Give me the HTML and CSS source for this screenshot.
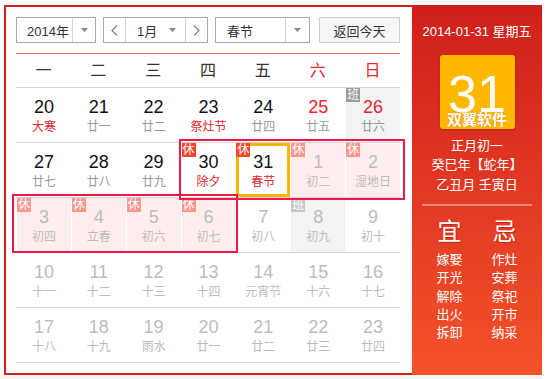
FILE: index.html
```html
<!DOCTYPE html>
<html lang="zh-CN">
<head>
<meta charset="utf-8">
<title>万年历</title>
<link rel="stylesheet" href="styles.css">
</head>
<body>
<div class="page">
  <div class="widget">
    <div class="main">
      <div class="toolbar">
        <div class="select year">
          <span class="sel-text">2014年</span>
          <span class="sel-arrow"><svg width="7" height="4" viewBox="0 0 7 4"><path d="M0 0H7L3.5 4Z" fill="#888"/></svg></span>
        </div>
        <div class="month-group">
          <span class="nav prev"><svg width="7" height="11" viewBox="0 0 7 11"><path d="M6 0.5L1 5.5L6 10.5" stroke="#808080" stroke-width="1.2" fill="none"/></svg></span>
          <span class="month"><span>1月</span><svg width="7" height="4" viewBox="0 0 7 4"><path d="M0 0H7L3.5 4Z" fill="#888"/></svg></span>
          <span class="nav next"><svg width="7" height="11" viewBox="0 0 7 11"><path d="M1 0.5L6 5.5L1 10.5" stroke="#808080" stroke-width="1.2" fill="none"/></svg></span>
        </div>
        <div class="select holiday">
          <span class="sel-text">春节</span>
          <span class="sel-arrow"><svg width="7" height="4" viewBox="0 0 7 4"><path d="M0 0H7L3.5 4Z" fill="#888"/></svg></span>
        </div>
        <button class="today-btn">返回今天</button>
      </div>

      <div class="weekdays">
        <span>一</span><span>二</span><span>三</span><span>四</span><span>五</span><span class="we">六</span><span class="we">日</span>
      </div>

      <div class="grid">
        <div class="row">
          <div class="cell cur"><div class="num">20</div><div class="lunar term">大寒</div></div>
          <div class="cell cur"><div class="num">21</div><div class="lunar">廿一</div></div>
          <div class="cell cur"><div class="num">22</div><div class="lunar">廿二</div></div>
          <div class="cell cur"><div class="num">23</div><div class="lunar term">祭灶节</div></div>
          <div class="cell cur"><div class="num">24</div><div class="lunar">廿四</div></div>
          <div class="cell cur weekend"><div class="num">25</div><div class="lunar">廿五</div></div>
          <div class="cell cur weekend work"><span class="badge ban">班</span><div class="num">26</div><div class="lunar">廿六</div></div>
        </div>
        <div class="row">
          <div class="cell cur"><div class="num">27</div><div class="lunar">廿七</div></div>
          <div class="cell cur"><div class="num">28</div><div class="lunar">廿八</div></div>
          <div class="cell cur"><div class="num">29</div><div class="lunar">廿九</div></div>
          <div class="cell cur"><span class="badge xiu">休</span><div class="num">30</div><div class="lunar term">除夕</div></div>
          <div class="cell cur today"><span class="badge xiu">休</span><div class="num">31</div><div class="lunar term">春节</div></div>
          <div class="cell other rest"><span class="badge xiu light">休</span><div class="num">1</div><div class="lunar">初二</div></div>
          <div class="cell other rest"><span class="badge xiu light">休</span><div class="num">2</div><div class="lunar">湿地日</div></div>
        </div>
        <div class="row">
          <div class="cell other rest"><span class="badge xiu light">休</span><div class="num">3</div><div class="lunar">初四</div></div>
          <div class="cell other rest"><span class="badge xiu light">休</span><div class="num">4</div><div class="lunar">立春</div></div>
          <div class="cell other rest"><span class="badge xiu light">休</span><div class="num">5</div><div class="lunar">初六</div></div>
          <div class="cell other rest"><span class="badge xiu light">休</span><div class="num">6</div><div class="lunar">初七</div></div>
          <div class="cell other"><div class="num">7</div><div class="lunar">初八</div></div>
          <div class="cell other work"><span class="badge ban light">班</span><div class="num">8</div><div class="lunar">初九</div></div>
          <div class="cell other"><div class="num">9</div><div class="lunar">初十</div></div>
        </div>
        <div class="row">
          <div class="cell other"><div class="num">10</div><div class="lunar">十一</div></div>
          <div class="cell other"><div class="num">11</div><div class="lunar">十二</div></div>
          <div class="cell other"><div class="num">12</div><div class="lunar">十三</div></div>
          <div class="cell other"><div class="num">13</div><div class="lunar">十四</div></div>
          <div class="cell other"><div class="num">14</div><div class="lunar">元宵节</div></div>
          <div class="cell other"><div class="num">15</div><div class="lunar">十六</div></div>
          <div class="cell other"><div class="num">16</div><div class="lunar">十七</div></div>
        </div>
        <div class="row">
          <div class="cell other"><div class="num">17</div><div class="lunar">十八</div></div>
          <div class="cell other"><div class="num">18</div><div class="lunar">十九</div></div>
          <div class="cell other"><div class="num">19</div><div class="lunar">雨水</div></div>
          <div class="cell other"><div class="num">20</div><div class="lunar">廿一</div></div>
          <div class="cell other"><div class="num">21</div><div class="lunar">廿二</div></div>
          <div class="cell other"><div class="num">22</div><div class="lunar">廿三</div></div>
          <div class="cell other"><div class="num">23</div><div class="lunar">廿四</div></div>
        </div>
        <div class="hbox hbox1"></div>
        <div class="hbox hbox2"></div>
      </div>
    </div>

    <aside class="panel">
      <div class="p-date">2014-01-31 星期五</div>
      <div class="big-day">
        <div class="big-num">31</div>
        <div class="brand">双翼软件</div>
      </div>
      <div class="lunar-info">
        <div>正月初一</div>
        <div>癸巳年【蛇年】</div>
        <div>乙丑月 壬寅日</div>
      </div>
      <div class="divider"></div>
      <div class="yiji">
        <div class="yj-col">
          <div class="yj-title">宜</div>
          <ul class="yj-list"><li>嫁娶</li><li>开光</li><li>解除</li><li>出火</li><li>拆卸</li></ul>
        </div>
        <div class="yj-col">
          <div class="yj-title">忌</div>
          <ul class="yj-list"><li>作灶</li><li>安葬</li><li>祭祀</li><li>开市</li><li>纳采</li></ul>
        </div>
      </div>
    </aside>
  </div>
  <div class="strip"></div>
</div>
</body>
</html>
```

FILE: styles.css
```css
* { box-sizing: border-box; }

html, body {
  margin: 0;
  padding: 0;
  background: #fff;
  font-family: "Liberation Sans", "Noto Sans CJK SC", sans-serif;
  color: #333;
}

.page {
  width: 542px;
  padding-top: 5px;
}

.widget {
  display: flex;
  margin-left: 4px;
  width: 538px;
  height: 370px;
}

.main {
  width: 408px;
  height: 370px;
  border: 2px solid #d0201c;
  border-right: none;
  padding: 10px 12px 0 10px;
}

/* toolbar */
.toolbar {
  display: flex;
  height: 26px;
  margin-bottom: 10px;
  font-size: 13px;
}

.select {
  display: flex;
  height: 26px;
  border: 1px solid #a9a9a9;
  background: #fff;
}

.sel-text {
  display: flex;
  align-items: center;
  padding-left: 10px;
  border-right: 1px solid #d6d6d6;
}

.sel-arrow {
  display: flex;
  align-items: center;
  justify-content: center;
  width: 22px;
}

.year { width: 80px; margin-right: 7px; }
.year .sel-text { width: 56px; }

.holiday { width: 95px; margin-right: 9px; }
.holiday .sel-text { width: 70px; padding-left: 11px; }
.holiday .sel-arrow { width: 23px; }

.month-group {
  display: flex;
  width: 105px;
  height: 26px;
  border: 1px solid #a9a9a9;
  margin-right: 7px;
}

.nav {
  display: flex;
  align-items: center;
  justify-content: center;
  width: 21px;
}

.prev { width: 22px; border-right: 1px solid #d0d0d0; }

.month {
  display: flex;
  align-items: center;
  justify-content: space-between;
  width: 60px;
  padding: 0 9px 0 11px;
  border-right: 1px solid #d0d0d0;
}

.today-btn {
  width: 81px;
  height: 26px;
  padding: 0;
  border: 1px solid #cfcfcf;
  background: #f6f6f6;
  color: #333;
  font-family: inherit;
  font-size: 13px;
}

/* weekday header */
.weekdays {
  display: grid;
  grid-template-columns: repeat(7, 1fr);
  height: 35px;
  border-top: 1px solid #ef6a5f;
  border-bottom: 1px solid #d2d2d2;
  line-height: 33px;
  font-size: 16px;
  text-align: center;
  color: #333;
}

.weekdays .we { color: #e5262c; }

/* grid */
.grid { position: relative; }

.row {
  display: grid;
  grid-template-columns: repeat(7, 1fr);
  height: 55px;
  border-bottom: 1px solid #d4d4d4;
}

.row:last-of-type { border-bottom: none; }

.cell {
  position: relative;
  border-left: 1px solid #fff;
  padding-top: 9px;
  text-align: center;
}

.num {
  font-size: 18px;
  line-height: 21px;
}

.lunar {
  font-size: 12px;
  line-height: 18px;
  color: #9a9a9a;
}

.cur .num { color: #111; }
.cur.weekend .num { color: #e5262c; }
.cur .lunar.term { color: #e3262b; }

.other .num { color: #bcbcbc; }
.other .lunar { color: #bcbcbc; }

.rest { background: #fdeeed; }
.work { background: #f3f3f3; }

.today { box-shadow: inset 0 0 0 3px #ffb400; }

.badge {
  position: absolute;
  left: 0;
  top: 0;
  width: 14px;
  height: 14px;
  font-size: 12px;
  line-height: 14px;
  color: #fff;
  text-align: center;
}

.badge.xiu { background: #f6452f; }
.badge.xiu.light { background: #f9978e; }
.badge.ban { background: #9a9a9a; }
.badge.ban.light { background: #c6c6c6; }

.hbox {
  position: absolute;
  border: 2px solid #f0174a;
  pointer-events: none;
}

.hbox1 { left: 163px; top: 51px; width: 226px; height: 61px; }
.hbox2 { left: -4px; top: 106px; width: 226px; height: 59px; }

/* right panel */
.panel {
  width: 130px;
  height: 370px;
  background: linear-gradient(#cf1f1b, #f4522a);
  color: #fff;
  padding: 18px 10px 0;
  display: flex;
  flex-direction: column;
  align-items: center;
}

.p-date {
  font-size: 13px;
  line-height: 18px;
  white-space: nowrap;
}

.big-day {
  margin-top: 14px;
  width: 75px;
  height: 74px;
  background: #ffb800;
  border-radius: 3px;
  box-shadow: 0 1px 3px rgba(120, 0, 0, 0.35);
  padding-top: 21px;
  display: flex;
  flex-direction: column;
  align-items: center;
}

.big-num {
  font-size: 52px;
  line-height: 37px;
}

.brand {
  font-size: 15px;
  line-height: 14px;
  font-weight: bold;
  white-space: nowrap;
  text-shadow: 0 0 2px rgba(200, 90, 0, 0.6);
}

.lunar-info {
  margin-top: 7px;
  font-size: 13px;
  line-height: 19.3px;
  text-align: center;
  white-space: nowrap;
}

.divider {
  margin-top: 10px;
  width: 110px;
  height: 2px;
  background: rgba(255, 200, 190, 0.55);
}

.yiji {
  display: flex;
  width: 110px;
  margin-top: 11.5px;
}

.yj-col {
  width: 55px;
  text-align: center;
}

.yj-title {
  font-size: 24px;
  line-height: 30px;
  margin-bottom: 4px;
  text-shadow: 1px 1px 1px rgba(90, 0, 0, 0.3);
}

.yj-list {
  list-style: none;
  margin: 0;
  padding: 0;
  font-size: 13px;
  line-height: 18.1px;
}

.strip {
  height: 10px;
  background: #f4f4f4;
}
```
